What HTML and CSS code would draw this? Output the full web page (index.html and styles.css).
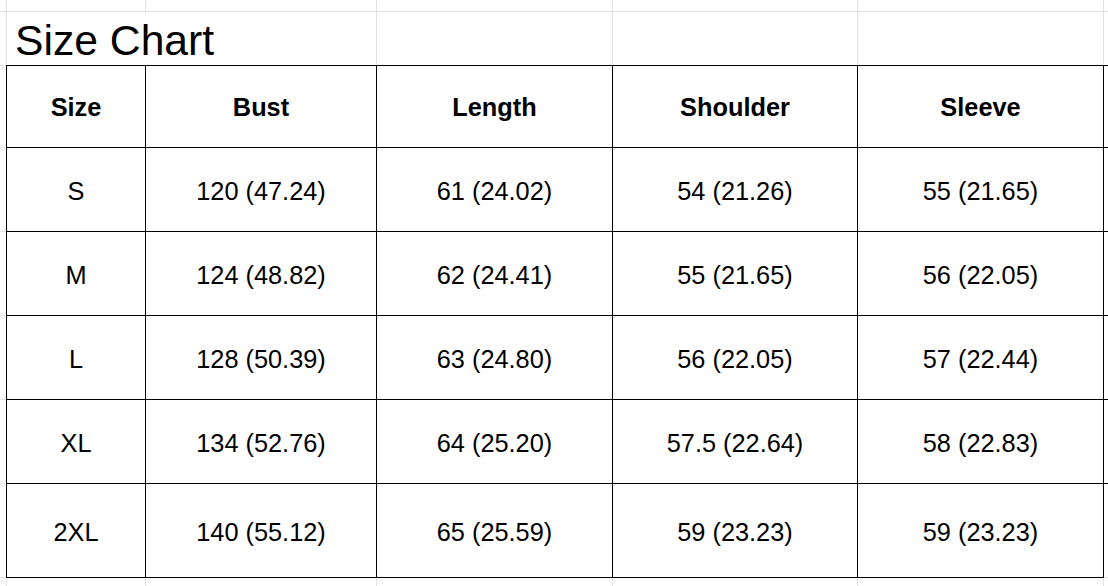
FILE: index.html
```html
<!DOCTYPE html>
<html>
<head>
<meta charset="utf-8">
<title>Size Chart</title>
<link rel="stylesheet" href="styles.css">
</head>
<body>
<div class="sheet">
  <!-- row 0: partial top row -->
  <div class="c"></div><div class="c"></div><div class="c"></div><div class="c"></div><div class="c"></div><div class="c"></div><div class="c"></div>
  <!-- row 1: title -->
  <div class="c"></div>
  <div class="c title">Size Chart</div>
  <div class="c"></div><div class="c"></div><div class="c"></div><div class="c"></div>
  <!-- header -->
  <div class="c"></div>
  <div class="t th">Size</div>
  <div class="t th">Bust</div>
  <div class="t th">Length</div>
  <div class="t th">Shoulder</div>
  <div class="t th">Sleeve</div>
  <div class="c rg"></div>
  <!-- S -->
  <div class="c"></div>
  <div class="t">S</div>
  <div class="t">120 (47.24)</div>
  <div class="t">61 (24.02)</div>
  <div class="t">54 (21.26)</div>
  <div class="t">55 (21.65)</div>
  <div class="c rg"></div>
  <!-- M -->
  <div class="c"></div>
  <div class="t">M</div>
  <div class="t">124 (48.82)</div>
  <div class="t">62 (24.41)</div>
  <div class="t">55 (21.65)</div>
  <div class="t">56 (22.05)</div>
  <div class="c rg"></div>
  <!-- L -->
  <div class="c"></div>
  <div class="t">L</div>
  <div class="t">128 (50.39)</div>
  <div class="t">63 (24.80)</div>
  <div class="t">56 (22.05)</div>
  <div class="t">57 (22.44)</div>
  <div class="c rg"></div>
  <!-- XL -->
  <div class="c"></div>
  <div class="t">XL</div>
  <div class="t">134 (52.76)</div>
  <div class="t">64 (25.20)</div>
  <div class="t">57.5 (22.64)</div>
  <div class="t">58 (22.83)</div>
  <div class="c rg"></div>
  <!-- 2XL -->
  <div class="c"></div>
  <div class="t">2XL</div>
  <div class="t">140 (55.12)</div>
  <div class="t">65 (25.59)</div>
  <div class="t">59 (23.23)</div>
  <div class="t">59 (23.23)</div>
  <div class="c rg"></div>
  <!-- bottom partial row -->
  <div class="c"></div><div class="c"></div><div class="c"></div><div class="c"></div><div class="c"></div><div class="c"></div><div class="c"></div>
</div>
</body>
</html>
```

FILE: styles.css
```css
html, body {
  margin: 0;
  padding: 0;
  background: #ffffff;
}

body {
  width: 1108px;
  height: 586px;
  overflow: hidden;
  font-family: "Liberation Sans", Arial, sans-serif;
  color: #000000;
}

.sheet {
  display: grid;
  grid-template-columns: 6px 138px 230px 235px 244px 245px 1fr;
  grid-template-rows: 11px 53px 81px 83px 83px 83px 83px 93px 1fr;
  gap: 1px;
  width: 1108px;
  height: 586px;
  background: #e2e2e2;
}

.c {
  background: #ffffff;
}

.title {
  grid-column: span 2;
  display: flex;
  align-items: flex-end;
  padding: 0 0 0 8px;
  font-size: 42.67px;
  line-height: normal;
  white-space: nowrap;
}

.t {
  background: #ffffff;
  box-shadow: 0 0 0 1px #000000;
  display: flex;
  align-items: center;
  justify-content: center;
  padding-top: 4px;
  font-size: 25.33px;
  white-space: nowrap;
}

.th {
  font-weight: bold;
  padding-top: 2px;
}

.rg {
  box-shadow: 0 -1px 0 0 #000000;
}
```
